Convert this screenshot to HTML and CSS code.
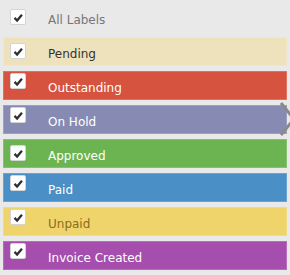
FILE: index.html
```html
<!DOCTYPE html>
<html lang="en">

<head>
    <meta charset="UTF-8">
    <meta name="viewport" content="width=device-width, initial-scale=1.0">
    <title>Labels</title>

    <link rel="stylesheet" href="styles.css">
</head>

<body>
    <div id="labels">
        <div class="row all low">
            <span class="box"><svg viewBox="0 0 16 16"><polyline points="4,9 7,12 12.5,5.5" /></svg></span>
            <span class="name">All Labels</span>
        </div>
        <div class="row pending low">
            <span class="box"><svg viewBox="0 0 16 16"><polyline points="4,9 7,12 12.5,5.5" /></svg></span>
            <span class="name">Pending</span>
        </div>
        <div class="row outstanding">
            <span class="box"><svg viewBox="0 0 16 16"><polyline points="4,9 7,12 12.5,5.5" /></svg></span>
            <span class="name">Outstanding</span>
        </div>
        <div class="row hold">
            <span class="box"><svg viewBox="0 0 16 16"><polyline points="4,9 7,12 12.5,5.5" /></svg></span>
            <span class="name">On Hold</span>
        </div>
        <div class="row approved low">
            <span class="box"><svg viewBox="0 0 16 16"><polyline points="4,9 7,12 12.5,5.5" /></svg></span>
            <span class="name">Approved</span>
        </div>
        <div class="row paid">
            <span class="box"><svg viewBox="0 0 16 16"><polyline points="4,9 7,12 12.5,5.5" /></svg></span>
            <span class="name">Paid</span>
        </div>
        <div class="row unpaid">
            <span class="box"><svg viewBox="0 0 16 16"><polyline points="4,9 7,12 12.5,5.5" /></svg></span>
            <span class="name">Unpaid</span>
        </div>
        <div class="row invoice">
            <span class="box"><svg viewBox="0 0 16 16"><polyline points="4,9 7,12 12.5,5.5" /></svg></span>
            <span class="name">Invoice Created</span>
        </div>

        <svg id="next" viewBox="0 0 16 36"><polyline points="2,2 15,18 2,34" /></svg>
    </div>
</body>

</html>
```

FILE: styles.css
```css
* {
    padding: 0;
    margin: 0;
}

body {
    background: #e9e9e9;
    font-family: "DejaVu Sans", sans-serif;
    font-size: 12px;
}

#labels {
    position: relative;
    display: flex;
    flex-direction: column;
    gap: 5px;
    padding: 3px;
    overflow: hidden;
}

.row {
    display: flex;
    align-items: center;
    height: 29px;
    padding-left: 7px;
    box-shadow: inset 0 0 0 1px rgba(255, 255, 255, 0.18);
    color: #fff;
}

.box {
    align-self: flex-start;
    margin-top: 2px;
    width: 16px;
    height: 16px;
    box-sizing: border-box;
    border: 1px solid #d4d4d4;
    border-radius: 2px;
    background: #fff;
}

.low .box {
    margin-top: 6px;
}

.box svg {
    display: block;
    width: 14px;
    height: 14px;
    fill: none;
    stroke: #2e2e2e;
    stroke-width: 2.6;
}

.name {
    margin-left: 22px;
    padding-top: 5px;
}

.all {
    box-shadow: none;
    color: #777;
}

.pending {
    background: #ede2bc;
    color: #333;
}

.outstanding {
    background: #d6533f;
}

.hold {
    background: #878bb3;
}

.approved {
    background: #6cb452;
}

.paid {
    background: #4a8fc6;
}

.unpaid {
    background: #efd46b;
    color: #8b6b1c;
}

.invoice {
    background: #a54eae;
}

#next {
    position: absolute;
    top: 101px;
    left: 279px;
    width: 16px;
    height: 36px;
    fill: none;
    stroke: #8a8a8a;
    stroke-width: 3;
}
```
